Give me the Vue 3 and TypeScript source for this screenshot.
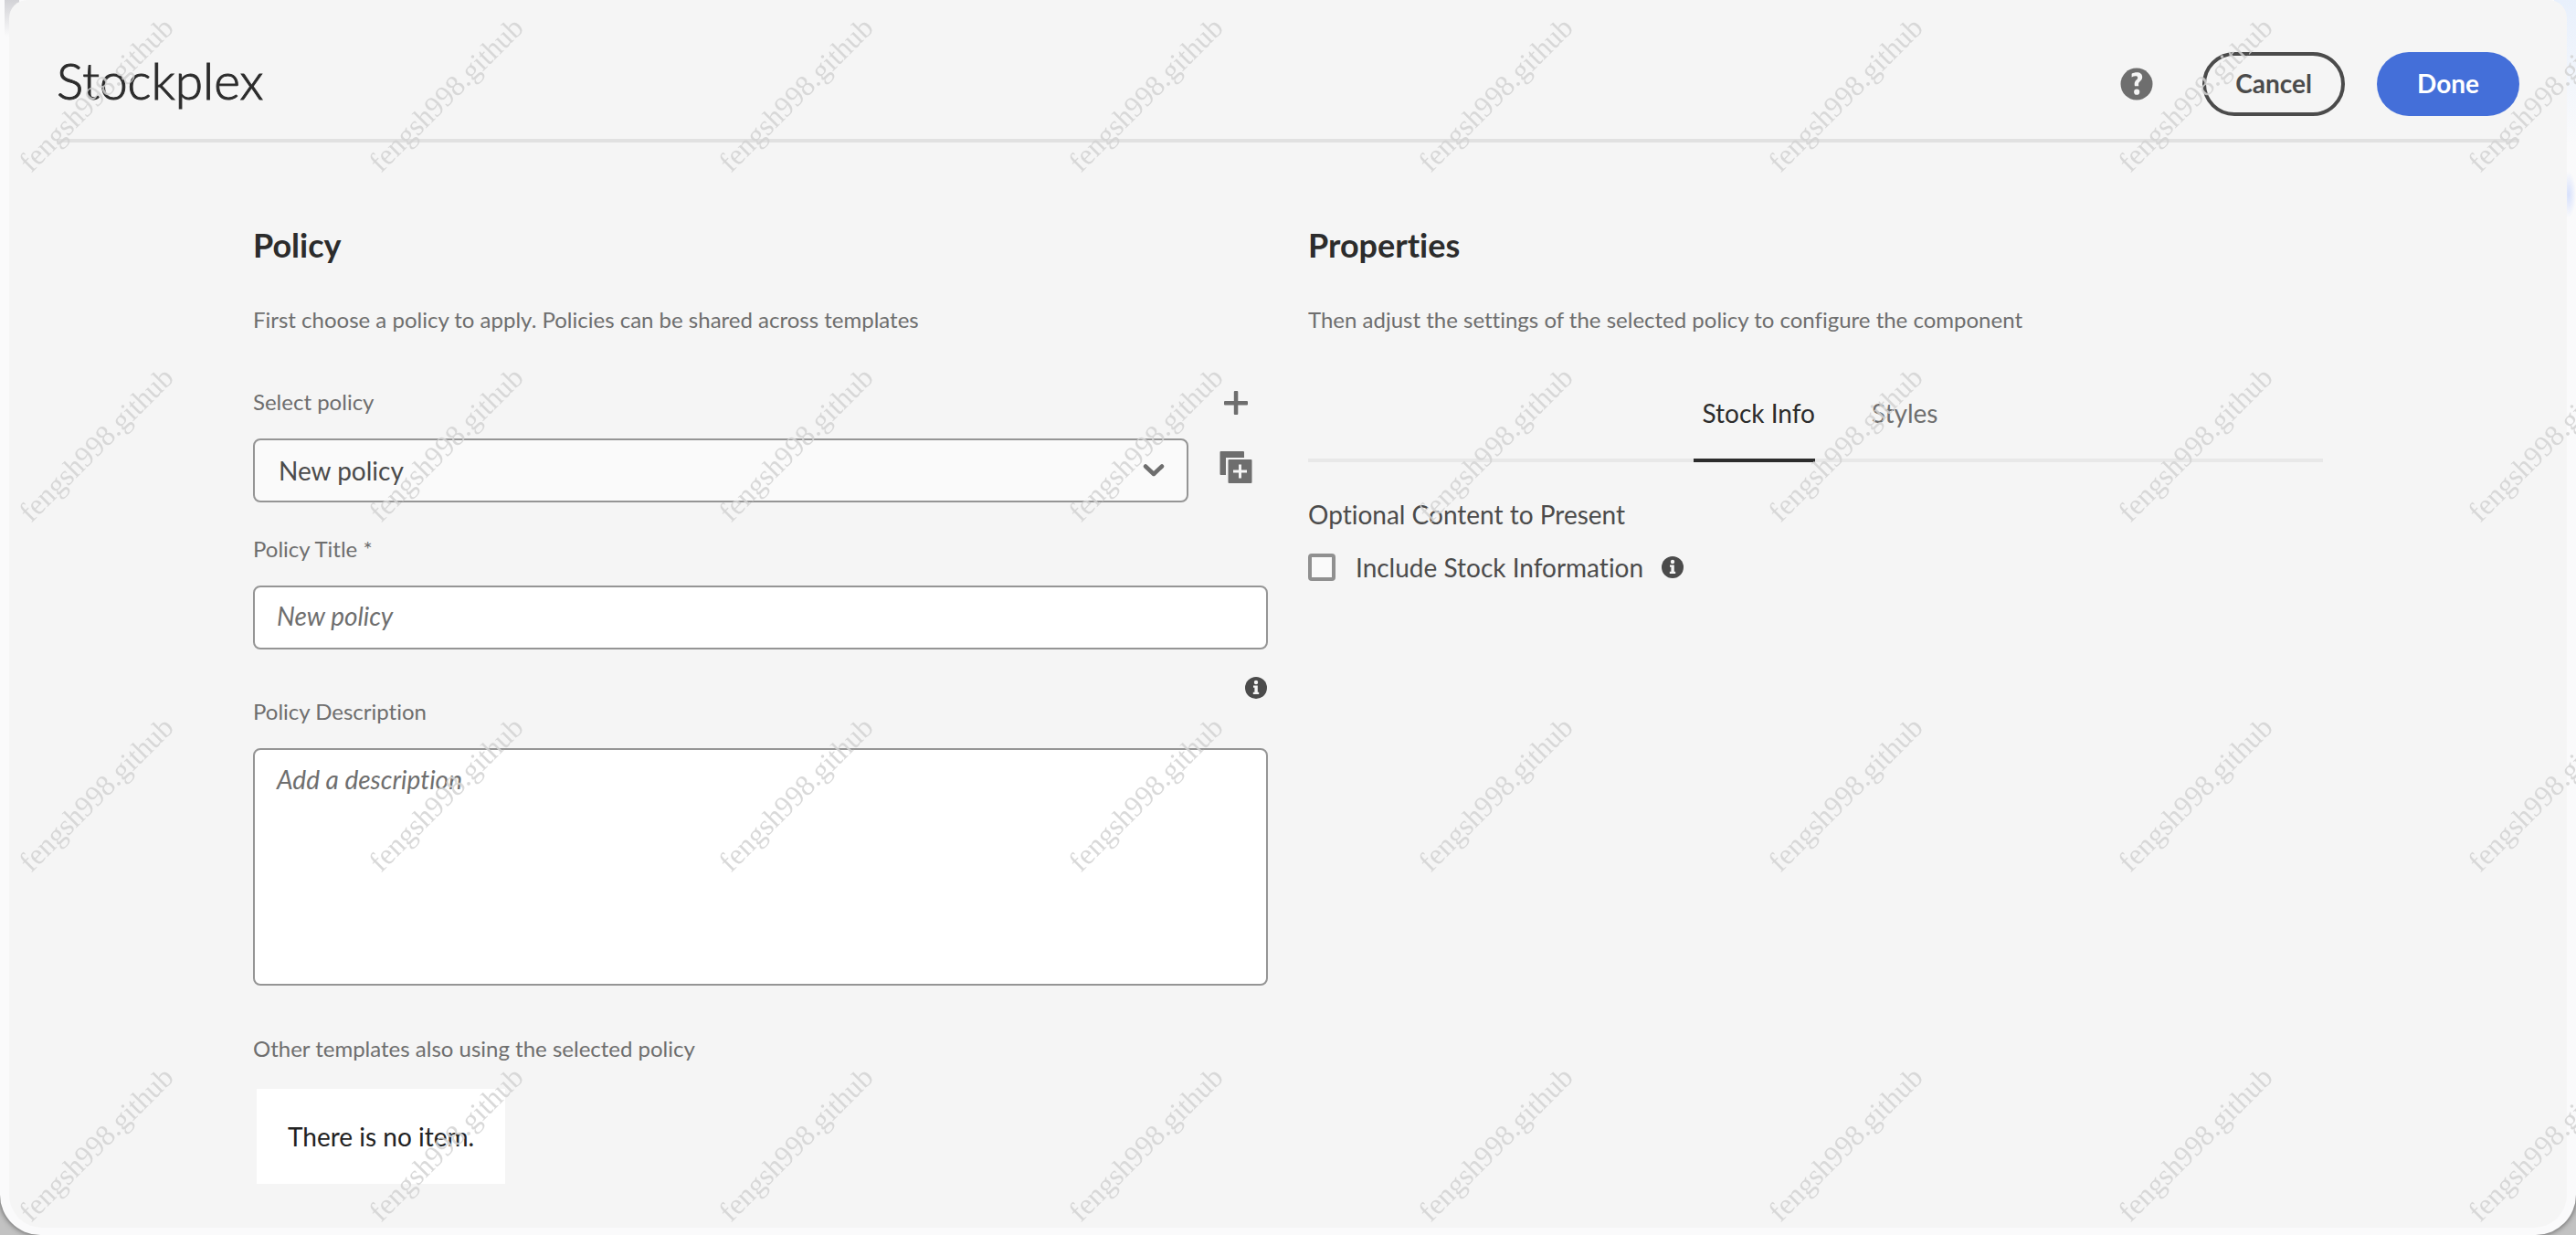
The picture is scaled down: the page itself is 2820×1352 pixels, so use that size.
<script setup lang="ts">
import { ref } from 'vue'

const policies: string[] = ['New policy']
const selected = ref('New policy')
const title = ref('')
const description = ref('')
const includeStock = ref(false)
const tabs: string[] = ['Stock Info', 'Styles']
const activeTab = ref('Stock Info')
</script>

<template>
  <div class="window">
    <main class="dialog">
      <header class="topbar">
        <h1>Stockplex</h1>
        <div class="actions">
          <button class="icon-button help" type="button" aria-label="Help">
            <svg width="36" height="36" viewBox="0 0 36 36" aria-hidden="true">
              <circle cx="18" cy="18" r="17.5" fill="#6e6e6e" />
              <path d="M12.600 6.800c1.600-1 3.600-1.500 5.700-1.500 3.800 0 5.900 2.100 5.900 4.900 0 2.500-1.300 3.800-2.600 5.100-1.100 1.100-1.600 1.900-1.500 3.200l.1 1.700h-4.300l-.2-1.600c-.2-2.100.6-3.500 2-5 1-1.100 1.500-1.800 1.500-2.700 0-1.100-.8-1.600-2.100-1.600-1.600 0-3 .4-4.500 1.200z" fill="#f5f5f5" />
              <circle cx="18.200" cy="26.700" r="3.100" fill="#f5f5f5" />
            </svg>
          </button>
          <button class="pill cancel" type="button">Cancel</button>
          <button class="pill done" type="button">Done</button>
        </div>
      </header>

      <div class="columns">
        <section class="column">
          <h2>Policy</h2>
          <p class="hint">First choose a policy to apply. Policies can be shared across templates</p>

          <div class="select-row">
            <div class="select-field">
              <label class="label" for="policy">Select policy</label>
              <div class="select-wrap">
                <select id="policy" v-model="selected" class="control">
                  <option v-for="p in policies" :key="p">{{ p }}</option>
                </select>
                <svg class="chevron" width="24" height="16" viewBox="0 0 24 16" aria-hidden="true">
                  <path d="M3 3.500l9 8.500 9-8.500" fill="none" stroke="#6e6e6e" stroke-width="4.500" stroke-linecap="round" stroke-linejoin="round" />
                </svg>
              </div>
            </div>
            <div class="tools">
              <button class="icon-button" type="button" aria-label="Add policy">
                <svg width="36" height="36" viewBox="0 0 36 36" aria-hidden="true">
                  <rect x="5" y="15" width="26" height="4.500" rx="1" fill="#6e6e6e" />
                  <rect x="15.800" y="4" width="4.500" height="26" rx="1" fill="#6e6e6e" />
                </svg>
              </button>
              <button class="icon-button" type="button" aria-label="Copy policy">
                <svg width="36" height="36" viewBox="0 0 36 36" aria-hidden="true">
                  <path d="M1.500 0H26a1 1 0 0 1 1 1v6H7v19H1.500a1 1 0 0 1-1-1V1a1 1 0 0 1 1-1z" fill="#6e6e6e" />
                  <rect x="9.500" y="9" width="26" height="26" rx="1" fill="#6e6e6e" />
                  <path d="M15 22h15M22.500 14.500v15" stroke="#f5f5f5" stroke-width="3" />
                </svg>
              </button>
            </div>
          </div>

          <label class="label title-label" for="title">Policy Title *</label>
          <input id="title" v-model="title" class="control text" type="text" placeholder="New policy" />

          <div class="info-row">
            <svg width="24" height="24" viewBox="0 0 24 24" role="img" aria-label="Policy title information">
              <circle cx="12" cy="12" r="12" fill="#4b4b4b" />
              <circle cx="12" cy="6" r="2.200" fill="#f5f5f5" />
              <path d="M9 9.500h4.800v7.200h1.400V19H8.800v-2.300h1.600v-5H9z" fill="#f5f5f5" />
            </svg>
          </div>

          <label class="label" for="description">Policy Description</label>
          <textarea id="description" v-model="description" class="control text area" placeholder="Add a description"></textarea>

          <p class="label others">Other templates also using the selected policy</p>
          <div class="empty">There is no item.</div>
        </section>

        <section class="column">
          <h2>Properties</h2>
          <p class="hint">Then adjust the settings of the selected policy to configure the component</p>
          <div class="tabs" role="tablist">
            <button
              v-for="t in tabs"
              :key="t"
              type="button"
              role="tab"
              class="tab"
              :class="{ active: t === activeTab }"
              :aria-selected="t === activeTab"
              @click="activeTab = t"
            >{{ t }}</button>
          </div>
          <h3>Optional Content to Present</h3>
          <div class="check-row">
            <input id="include" v-model="includeStock" type="checkbox" />
            <label for="include">Include Stock Information</label>
            <svg width="24" height="24" viewBox="0 0 24 24" role="img" aria-label="Stock information help">
              <circle cx="12" cy="12" r="12" fill="#4b4b4b" />
              <circle cx="12" cy="6" r="2.200" fill="#f5f5f5" />
              <path d="M9 9.500h4.800v7.200h1.400V19H8.800v-2.300h1.600v-5H9z" fill="#f5f5f5" />
            </svg>
          </div>
        </section>
      </div>
    </main>

    <svg class="watermark" aria-hidden="true">
      <defs>
        <pattern id="mark" width="383" height="383" patternUnits="userSpaceOnUse">
          <text x="34" y="190" transform="rotate(-45 34 190)">fengsh998.github</text>
        </pattern>
      </defs>
      <rect width="100%" height="100%" fill="url(#mark)" />
    </svg>
  </div>
</template>

<style>
body {
  background: #c2c2c2;
}
</style>

<style scoped>
.window {
  position: relative;
  box-sizing: border-box;
  min-height: 100vh;
  padding: 0 10px 8px;
  overflow: hidden;
  background:
    linear-gradient(#d2d2d6, rgba(250, 250, 250, 0)) 5px 0 / 16px 40px no-repeat,
    linear-gradient(#e8f0fc, rgba(250, 250, 250, 0)) 100% 0 / 24px 160px no-repeat,
    radial-gradient(closest-side, #d6e0fc, rgba(250, 250, 250, 0)) 100% 188px / 16px 50px no-repeat,
    #fafafb;
  border-radius: 0 0 44px 44px;
  box-shadow: 0 0 6px rgba(0, 0, 0, 0.6);
  font-family: Lato, "Noto Sans", sans-serif;
  font-variant-ligatures: none;
  color: #4b4b4b;
}
.dialog {
  box-sizing: border-box;
  min-height: calc(100vh - 8px);
  padding: 0 52px;
  background: #f5f5f5;
  border-radius: 20px 20px 36px 36px;
}
.topbar {
  display: flex;
  align-items: center;
  justify-content: space-between;
  box-sizing: border-box;
  height: 156px;
  padding-top: 32px;
  border-bottom: 4px solid #e1e1e1;
}
h1 {
  margin: 0;
  padding-bottom: 8px;
  font-size: 55px;
  font-weight: 300;
  line-height: 64px;
  color: #2c2c2c;
  -webkit-text-stroke: 1px #2c2c2c;
}
.actions {
  display: flex;
  align-items: center;
}
button {
  font-family: inherit;
  font-variant-ligatures: none;
  cursor: pointer;
}
.icon-button {
  display: block;
  width: 36px;
  height: 36px;
  padding: 0;
  border: 0;
  background: none;
}
.icon-button svg {
  display: block;
}
.pill {
  box-sizing: border-box;
  width: 156px;
  height: 70px;
  padding: 0 0 2px;
  border-radius: 35px;
  font-size: 28px;
  font-weight: 700;
}
.help {
  margin-right: 54px;
}
.cancel {
  margin-right: 35px;
  border: 4px solid #4b4b4b;
  background: transparent;
  color: #4b4b4b;
}
.done {
  border: 0;
  background: #446fd9;
  color: #fff;
}
.columns {
  display: grid;
  grid-template-columns: 1fr 1fr;
  column-gap: 44px;
  padding: 88px 215px 0;
}
h2 {
  margin: 0;
  font-size: 36px;
  font-weight: 700;
  line-height: 48px;
  color: #2c2c2c;
}
.hint {
  margin: 42px 0 0;
  font-size: 24px;
  line-height: 32px;
  color: #6e6e6e;
}
.label {
  display: block;
  margin: 0;
  font-size: 24px;
  line-height: 32px;
  color: #6e6e6e;
}
.select-row {
  display: flex;
  margin-top: 58px;
}
.select-field {
  flex: 1;
}
.select-wrap {
  display: grid;
  align-items: center;
  margin-top: 24px;
}
.select-wrap > * {
  grid-area: 1 / 1;
}
.chevron {
  justify-self: end;
  margin-right: 26px;
  pointer-events: none;
}
.tools {
  display: flex;
  flex-direction: column;
  gap: 34px;
  width: 53px;
  margin-left: 34px;
}
.control {
  display: block;
  box-sizing: border-box;
  width: 100%;
  height: 70px;
  border: 2px solid #959595;
  border-radius: 8px;
  font-family: inherit;
  font-size: 28px;
  font-variant-ligatures: none;
  color: #4b4b4b;
}
select.control {
  appearance: none;
  padding: 0 26px;
  background: #fafafa;
}
.text {
  padding: 0 24px 4px;
  margin-top: 24px;
  background: #fff;
}
.text::placeholder {
  font-style: italic;
  color: #6e6e6e;
  opacity: 1;
}
.area {
  height: 260px;
  padding-top: 14px;
  line-height: 36px;
  resize: none;
}
.title-label {
  margin-top: 35px;
}
.info-row {
  display: flex;
  justify-content: flex-end;
  box-sizing: border-box;
  height: 52px;
  padding: 30px 1px 0;
}
.info-row svg,
.check-row svg {
  flex: none;
}
.others {
  margin-top: 53px;
}
.empty {
  width: fit-content;
  margin: 28px 4px 0;
  padding: 34px;
  background: #fff;
  font-size: 28px;
  line-height: 36px;
  color: #222;
}
.tabs {
  display: flex;
  justify-content: center;
  gap: 52px;
  margin-top: 64px;
  border-bottom: 4px solid #e8e8e8;
}
.tab {
  height: 76px;
  margin-bottom: -4px;
  padding: 0 0 28px 10px;
  border: 0;
  border-bottom: 4px solid transparent;
  background: none;
  font-size: 28px;
  color: #6e6e6e;
}
.tab.active {
  border-bottom-color: #2c2c2c;
  color: #2c2c2c;
}
h3 {
  margin: 37px 0 0;
  font-size: 28px;
  font-weight: 400;
  line-height: 40px;
}
.check-row {
  display: flex;
  align-items: center;
  margin-top: 18px;
  font-size: 28px;
  line-height: 40px;
}
.check-row input {
  appearance: none;
  box-sizing: border-box;
  width: 30px;
  height: 30px;
  margin: 0 22px 0 0;
  border: 4px solid #909090;
  border-radius: 4px;
  background: #fafafa;
}
.check-row svg {
  margin-left: 20px;
}
.watermark {
  position: absolute;
  inset: 0;
  width: 100%;
  height: 100%;
  pointer-events: none;
}
.watermark text {
  font-family: "Liberation Serif", serif;
  font-size: 32px;
  fill: #d2d2d2;
  fill-opacity: 0.85;
}
</style>
